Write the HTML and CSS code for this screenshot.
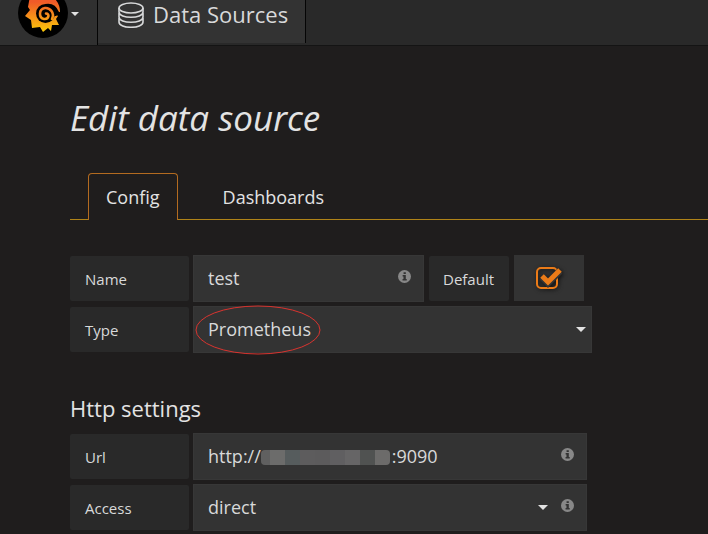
FILE: index.html
```html
<!DOCTYPE html>
<html lang="en">
<head>
<meta charset="utf-8">
<title>Edit data source</title>
<meta name="viewport" content="width=device-width, initial-scale=1">
<link rel="stylesheet" href="styles.css">
</head>
<body>
<header class="navbar">
  <button class="brand" type="button" aria-label="Main menu">
    <svg class="logo" viewBox="0 0 50 50" aria-hidden="true">
      <defs>
        <linearGradient id="flame" gradientUnits="userSpaceOnUse" x1="0" y1="14" x2="0" y2="44">
          <stop offset="0" stop-color="#f05a28"/>
          <stop offset="1" stop-color="#fbca0a"/>
        </linearGradient>
      </defs>
      <circle cx="25" cy="25" r="25" fill="#000"/>
      <path fill="url(#flame)" d="M12 8L10 19L12 22L7 28L13 32L14 40L22 39L25 44L30 40L33 43L34 37L41 37L38 31L40 28L36 25L42 24Q42 15 35 9L30 5Z"/>
      <circle cx="27.5" cy="25.5" r="9.5" fill="#000"/>
      <path fill="#000" d="M27 16Q37 14 41 24L42 25L38 28L34 28Z"/>
      <path fill="none" stroke="url(#flame)" stroke-width="2.6" stroke-linecap="round" d="M34 31C37 25 32 19.500 27 20C20.500 21 20.500 30 26 31C31 31.500 32 25.500 28 25.500"/>
    </svg>
    <span class="caret"></span>
  </button>
  <a class="section" href="#">
    <svg class="database" viewBox="0 0 28 26" aria-hidden="true">
      <g fill="none" stroke="#d8d9da" stroke-width="1.6">
        <ellipse cx="14" cy="6" rx="12" ry="5"/>
        <path d="M2 6v4c0 7 24 7 24 0V6M2 11v4c0 7 24 7 24 0v-4M2 16v4c0 7 24 7 24 0v-4"/>
      </g>
    </svg>
    <span>Data Sources</span>
  </a>
</header>
<main class="page">
  <h1>Edit data source</h1>
  <nav class="tabs">
    <a class="tab active" href="#">Config</a>
    <a class="tab" href="#">Dashboards</a>
  </nav>
  <form>
    <div class="group">
      <div class="row">
        <label class="label" for="name">Name</label>
        <div class="field name-field">
          <input id="name" type="text" value="test">
          <svg class="info" viewBox="0 0 14 14" aria-hidden="true"><circle cx="7" cy="7" r="7"/><path d="M6 2.300h2.400v2H6zM5 5.400h3.400v4.400h1v1.600H4.900V9.800h1V7H5z"/></svg>
        </div>
        <label class="label compact" for="default">Default</label>
        <div class="check">
          <input id="default" type="checkbox" checked>
          <svg viewBox="0 0 28 26" aria-hidden="true">
            <rect x="2" y="3" width="20" height="20" rx="4" fill="none" stroke="#eb7b18" stroke-width="2"/>
            <path d="M7 12l6 6L25 6" fill="none" stroke="#333" stroke-width="7"/>
            <path d="M7 11l6 6L25 5" fill="none" stroke="#eb7b18" stroke-width="5"/>
          </svg>
        </div>
      </div>
      <div class="row">
        <label class="label" for="type">Type</label>
        <div class="field type-field">
          <select id="type"><option>Prometheus</option></select>
          <span class="caret"></span>
          <svg class="ring" viewBox="0 0 126 50" aria-hidden="true"><ellipse cx="63" cy="25" rx="62" ry="24"/></svg>
        </div>
      </div>
    </div>
    <h2>Http settings</h2>
    <div class="group">
      <div class="row">
        <label class="label" for="url">Url</label>
        <div class="field http-field">
          <input id="url" type="text" value="http://&nbsp;&nbsp;&nbsp;&nbsp;&nbsp;&nbsp;&nbsp;&nbsp;&nbsp;&nbsp;&nbsp;&nbsp;&nbsp;&nbsp;&nbsp;&nbsp;&nbsp;&nbsp;&nbsp;&nbsp;&nbsp;&nbsp;&nbsp;&nbsp;&nbsp;&nbsp;&nbsp;&nbsp;:9090">
          <span class="mosaic"></span>
          <svg class="info" viewBox="0 0 14 14" aria-hidden="true"><circle cx="7" cy="7" r="7"/><path d="M6 2.300h2.400v2H6zM5 5.400h3.400v4.400h1v1.600H4.900V9.800h1V7H5z"/></svg>
        </div>
      </div>
      <div class="row">
        <label class="label" for="access">Access</label>
        <div class="field http-field">
          <select id="access"><option>direct</option></select>
          <span class="caret"></span>
          <svg class="info" viewBox="0 0 14 14" aria-hidden="true"><circle cx="7" cy="7" r="7"/><path d="M6 2.300h2.400v2H6zM5 5.400h3.400v4.400h1v1.600H4.900V9.800h1V7H5z"/></svg>
        </div>
      </div>
    </div>
  </form>
</main>
</body>
</html>
```
FILE: styles.css
```css
* { box-sizing: border-box; }

body {
  margin: 0;
  background: #1f1d1d;
  color: #d8d9da;
  font: 18px/24px "Open Sans", "Noto Sans", sans-serif;
}

a { color: inherit; text-decoration: none; }

button, input, select { font: inherit; color: inherit; }

.navbar {
  display: flex;
  height: 46px;
  background: #292929;
  border-bottom: 1px solid #141414;
}

.brand {
  display: flex;
  align-items: flex-start;
  gap: 3px;
  width: 98px;
  padding: 0 0 0 18px;
  border: 0;
  border-right: 1px solid #050505;
  background: #303030;
  overflow: hidden;
}

.logo {
  width: 50px;
  height: 50px;
  margin-top: -12px;
  flex: none;
}

.caret {
  flex: none;
  border: 4px solid transparent;
  border-top-color: #e3e3e3;
  border-bottom: 0;
}

.brand .caret { margin-top: 12px; }

.section {
  display: flex;
  align-items: flex-start;
  gap: 8px;
  height: 43px;
  padding: 0 17px 0 19px;
  border-right: 1px solid #050505;
  background: #333;
  font-size: 22px;
  line-height: 28px;
}

.database { width: 28px; height: 26px; margin-top: 2px; }

.page { padding: 48px 0 0 70px; overflow: hidden; }

h1 {
  margin: 0 0 31px;
  color: #e3e3e3;
  font-size: 35px;
  font-style: italic;
  font-weight: 400;
  line-height: 48px;
}

.tabs {
  display: flex;
  padding-left: 18px;
  margin-bottom: 35px;
  border-bottom: 1px solid #b08318;
}

.tab {
  padding: 11px 17px 10px;
  margin-bottom: -1px;
  border: 1px solid transparent;
  border-bottom: 0;
  margin-right: 27px;
  color: #e3e3e3;
}

.tab.active {
  padding-bottom: 11px;
  border-color: #b36b20;
  border-radius: 4px 4px 0 0;
  background: #1f1d1d;
}

.group { display: grid; gap: 4px; }

.row { display: flex; height: 47px; }

.label {
  width: 119px;
  height: 45px;
  margin: 1px 4px 1px 0;
  padding: 0 15px;
  border-radius: 2px;
  background: #292929;
  font-size: 15px;
  line-height: 47px;
}

.label.compact { width: 80px; margin: 1px 5px; padding: 0 14px; }

.field {
  position: relative;
  display: flex;
  align-items: center;
  background: #333;
  border: 1px solid #373737;
}

.name-field { width: 231px; }
.type-field { width: 399px; padding-right: 5px; }
.http-field { width: 394px; padding-right: 12px; }

.name-field { padding-right: 12px; }

.field input, .field select {
  flex: 1;
  min-width: 0;
  height: 100%;
  padding: 0 14px 2px;
  border: 0;
  outline: 0;
  background: none;
  appearance: none;
}

.info {
  flex: none;
  width: 13px;
  height: 13px;
  margin-bottom: 4px;
}

.info circle { fill: #888; }
.info path { fill: #333; }

.field .caret { border-width: 5px; border-bottom: 0; }
.field .caret + .info { margin-left: 13px; }

.check {
  position: relative;
  display: grid;
  place-items: center;
  width: 70px;
  height: 46px;
  background: #333;
}

.check input {
  grid-area: 1 / 1;
  width: 100%;
  height: 100%;
  margin: 0;
  appearance: none;
}

.check svg {
  grid-area: 1 / 1;
  width: 28px;
  height: 26px;
  pointer-events: none;
  filter: drop-shadow(1px 1px 2px #111);
}

.ring {
  position: absolute;
  left: 1px;
  top: -2px;
  width: 126px;
  height: 50px;
  fill: none;
  stroke: #d9342f;
  pointer-events: none;
}

.mosaic {
  position: absolute;
  left: 67px;
  top: 16px;
  width: 129px;
  height: 15px;
  border-radius: 4px;
  background: linear-gradient(90deg, #606060 9px, #6c6c6b 9px 24px, #565c5d 24px 39px, #5d5c5d 39px 54px, #5c5b5c 54px 69px, #605f61 69px 84px, #666566 84px 99px, #505251 99px 114px, #6c6b6a 114px);
}

h2 {
  margin: 41px 0 11px;
  color: #e3e3e3;
  font-size: 22px;
  font-weight: 400;
  line-height: 28px;
}
```
